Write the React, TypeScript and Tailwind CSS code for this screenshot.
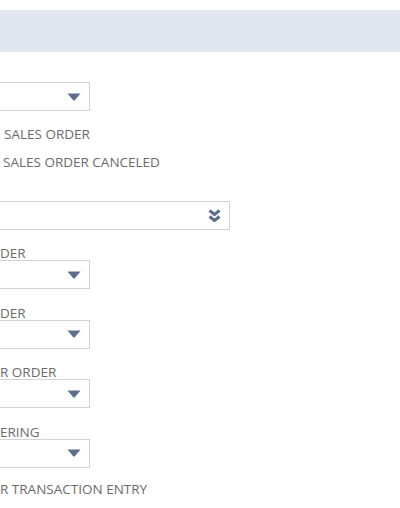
import React from "react";

const font = { fontFamily: '"Open Sans", "Liberation Sans", sans-serif' };

function Caret() {
  return (
    <svg width="14" height="8" viewBox="0 0 14 8" className="shrink-0">
      <path d="M0.5 0.5 H13.5 L8 7 Q7 8 6 7 Z" fill="#5b6e8c" />
    </svg>
  );
}

function DoubleChevron() {
  return (
    <svg width="13" height="14" viewBox="0 0 13 14" className="shrink-0">
      <path d="M1.5 1.5 L6.5 5.5 L11.5 1.5" stroke="#5b6e8c" strokeWidth="3" fill="none" strokeLinejoin="round" />
      <path d="M1.5 7.5 L6.5 11.5 L11.5 7.5" stroke="#5b6e8c" strokeWidth="3" fill="none" strokeLinejoin="round" />
    </svg>
  );
}

function Select({ wide = false }: { wide?: boolean }) {
  return (
    <div
      className={`flex items-center justify-end border border-l-0 border-[#d3d3d3] bg-white h-[29px] ${
        wide ? "w-[230px] pr-[8px]" : "w-[90px] pr-[8px]"
      }`}
    >
      {wide ? <DoubleChevron /> : <Caret />}
    </div>
  );
}

function Label({ children }: { children: React.ReactNode }) {
  return <div className="text-[13.5px] leading-[14px] text-[#6b6b6b] whitespace-nowrap">{children}</div>;
}

const fields = ["DER", "DER", "R ORDER", "ERING"];

export default function App() {
  return (
    <div className="w-[400px] h-[508px] bg-white overflow-hidden" style={font}>
      <div className="mt-[10px] h-[42px] bg-[#e1e6ef]" />

      <div className="mt-[30px]">
        <Select />
      </div>

      <div className="mt-[16px] pl-[4px]">
        <Label>SALES ORDER</Label>
      </div>
      <div className="mt-[14px] pl-[3px]">
        <Label>SALES ORDER CANCELED</Label>
      </div>

      <div className="mt-[32px]">
        <Select wide />
      </div>

      <div className="mt-[16px] flex flex-col gap-[16.5px]">
        {fields.map((f, i) => (
          <div key={i}>
            <Label>{f}</Label>
            <Select />
          </div>
        ))}
      </div>

      <div className="mt-[14px]">
        <Label>R TRANSACTION ENTRY</Label>
      </div>
    </div>
  );
}
